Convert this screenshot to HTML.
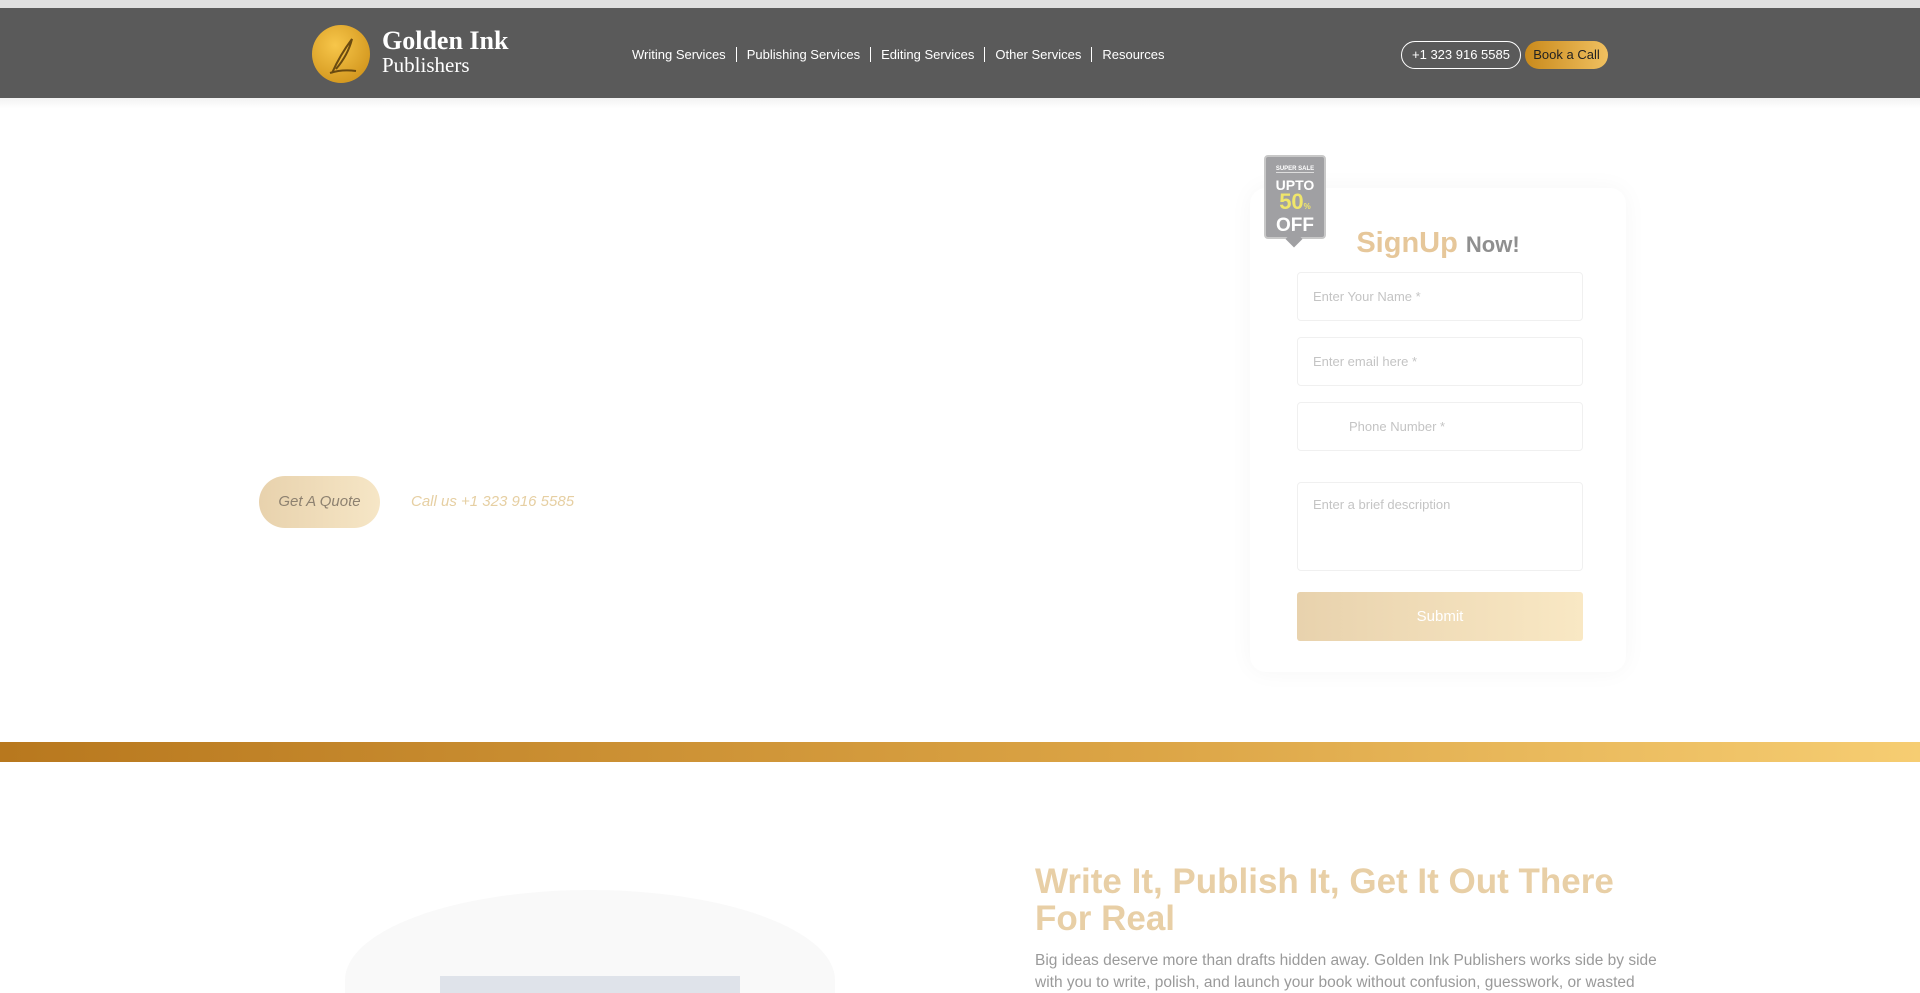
<!DOCTYPE html>
<html style="width:1920px;height:993px;overflow:hidden"><head><meta charset="utf-8"><style>
*{margin:0;padding:0;box-sizing:border-box}
body{width:1920px;height:993px;overflow:hidden;background:#fff;font-family:"Liberation Sans",sans-serif;position:relative}
.a{position:absolute}
.nav a{color:#fff;font-size:13px;text-decoration:none;padding:0 10px;border-left:1px solid #fff;line-height:15px}
.nav a:first-child{border-left:none}
.inp{position:absolute;left:1297px;width:286px;height:49px;border:1px solid #f0f0f0;border-radius:4px;background:#fff;color:#c4c4c4;font-size:13px;padding:16px 0 0 15px}
</style></head><body>
<div class="a" style="left:0;top:0;width:1920px;height:8px;background:#e0e0e0"></div>
<div class="a" style="left:0;top:8px;width:1920px;height:90px;background:#5a5a5a"></div>
<div class="a" style="left:0;top:98px;width:1920px;height:10px;background:linear-gradient(#f2f2f2,#fff)"></div>
<div class="a" style="left:312px;top:25px;width:58px;height:58px;border-radius:50%;background:radial-gradient(circle at 40% 35%,#f7c64a,#c98a12)"></div>
<svg class="a" style="left:312px;top:25px" width="58" height="58"><path d="M20 48 Q28 30 40 14 Q36 30 24 44 M18 48 Q30 44 44 46" stroke="#6a4a10" stroke-width="2" fill="none"/></svg>
<div class="a" style="left:382px;top:26px;color:#fff;font-family:'Liberation Serif',serif;font-size:26px;font-weight:bold">Golden Ink</div>
<div class="a" style="left:382px;top:53px;color:#fff;font-family:'Liberation Serif',serif;font-size:21px">Publishers</div>
<div class="a nav" style="left:622px;top:47px;display:flex">
<a>Writing Services</a><a>Publishing Services</a><a>Editing Services</a><a>Other Services</a><a>Resources</a></div>
<div class="a" style="left:1401px;top:41px;width:120px;height:28px;border:1px solid #fff;border-radius:14px;color:#fff;font-size:13px;text-align:center;line-height:26px">+1 323 916 5585</div>
<div class="a" style="left:1525px;top:41px;width:83px;height:28px;border-radius:14px;background:linear-gradient(90deg,#c98a1c,#f0c060);color:#222;font-size:13px;text-align:center;line-height:28px">Book a Call</div>
<div class="a" style="left:259px;top:476px;width:121px;height:52px;border-radius:26px;background:linear-gradient(90deg,#e8d2ad,#f6e6c6);color:#8d8170;font-size:15px;font-style:italic;text-align:center;line-height:52px">Get A Quote</div>
<div class="a" style="left:411px;top:493px;color:#e6cfa2;font-size:15px;font-style:italic">Call us +1 323 916 5585</div>
<div class="a" style="left:1250px;top:188px;width:376px;height:484px;border-radius:16px;background:#fff;box-shadow:0 0 24px rgba(0,0,0,.04)"></div>
<div class="a" style="left:1264px;top:155px;width:62px;height:84px;border-radius:4px;background:#a0a0a3;border:2px solid #c8c8c8;text-align:center;color:#fff;font-weight:bold">
<div style="font-size:6px;margin-top:7px;border-bottom:1px solid #ddd;display:inline-block">SUPER SALE</div>
<div style="font-size:14px;line-height:14px;margin-top:3px">UPTO</div>
<div style="font-size:22px;line-height:20px;color:#f0e66a">50<span style="font-size:8px">%</span></div>
<div style="font-size:19px;line-height:18px">OFF</div></div>
<div class="a" style="left:1288px;top:233px;width:12px;height:12px;background:#a0a0a3;transform:rotate(45deg)"></div>
<div class="a" style="left:1250px;top:227px;width:376px;text-align:center;font-size:29px;font-weight:bold"><span style="color:#e6c79a">SignUp</span> <span style="color:#8f8f8f;font-size:22px">Now!</span></div>
<div class="inp" style="top:272px">Enter Your Name *</div>
<div class="inp" style="top:337px">Enter email here *</div>
<div class="inp" style="top:402px;padding-left:51px">Phone Number *</div>
<div class="inp" style="top:482px;height:89px;padding-top:14px">Enter a brief description</div>
<div class="a" style="left:1297px;top:592px;width:286px;height:49px;border-radius:3px;background:linear-gradient(90deg,#e8d2ad,#f9e8c4);color:#fff;font-size:15px;text-align:center;line-height:49px">Submit</div>
<div class="a" style="left:0;top:742px;width:1920px;height:20px;background:linear-gradient(90deg,#b8781e,#dca546 60%,#f6cd72)"></div>
<div class="a" style="left:345px;top:890px;width:490px;height:103px;border-radius:50% 50% 0 0/90px 90px 0 0;background:#f9f9f9"></div>
<div class="a" style="left:440px;top:976px;width:300px;height:17px;background:#dfe3ea"></div>
<div class="a" style="left:1035px;top:863px;width:640px;color:#e8cfa6;font-size:35px;font-weight:bold;line-height:37px">Write It, Publish It, Get It Out There For Real</div>
<div class="a" style="left:1035px;top:950px;width:630px;color:#9a9a9a;font-size:15.5px;line-height:22px">Big ideas deserve more than drafts hidden away. Golden Ink Publishers works side by side with you to write, polish, and launch your book without confusion, guesswork, or wasted</div>
</body></html>
